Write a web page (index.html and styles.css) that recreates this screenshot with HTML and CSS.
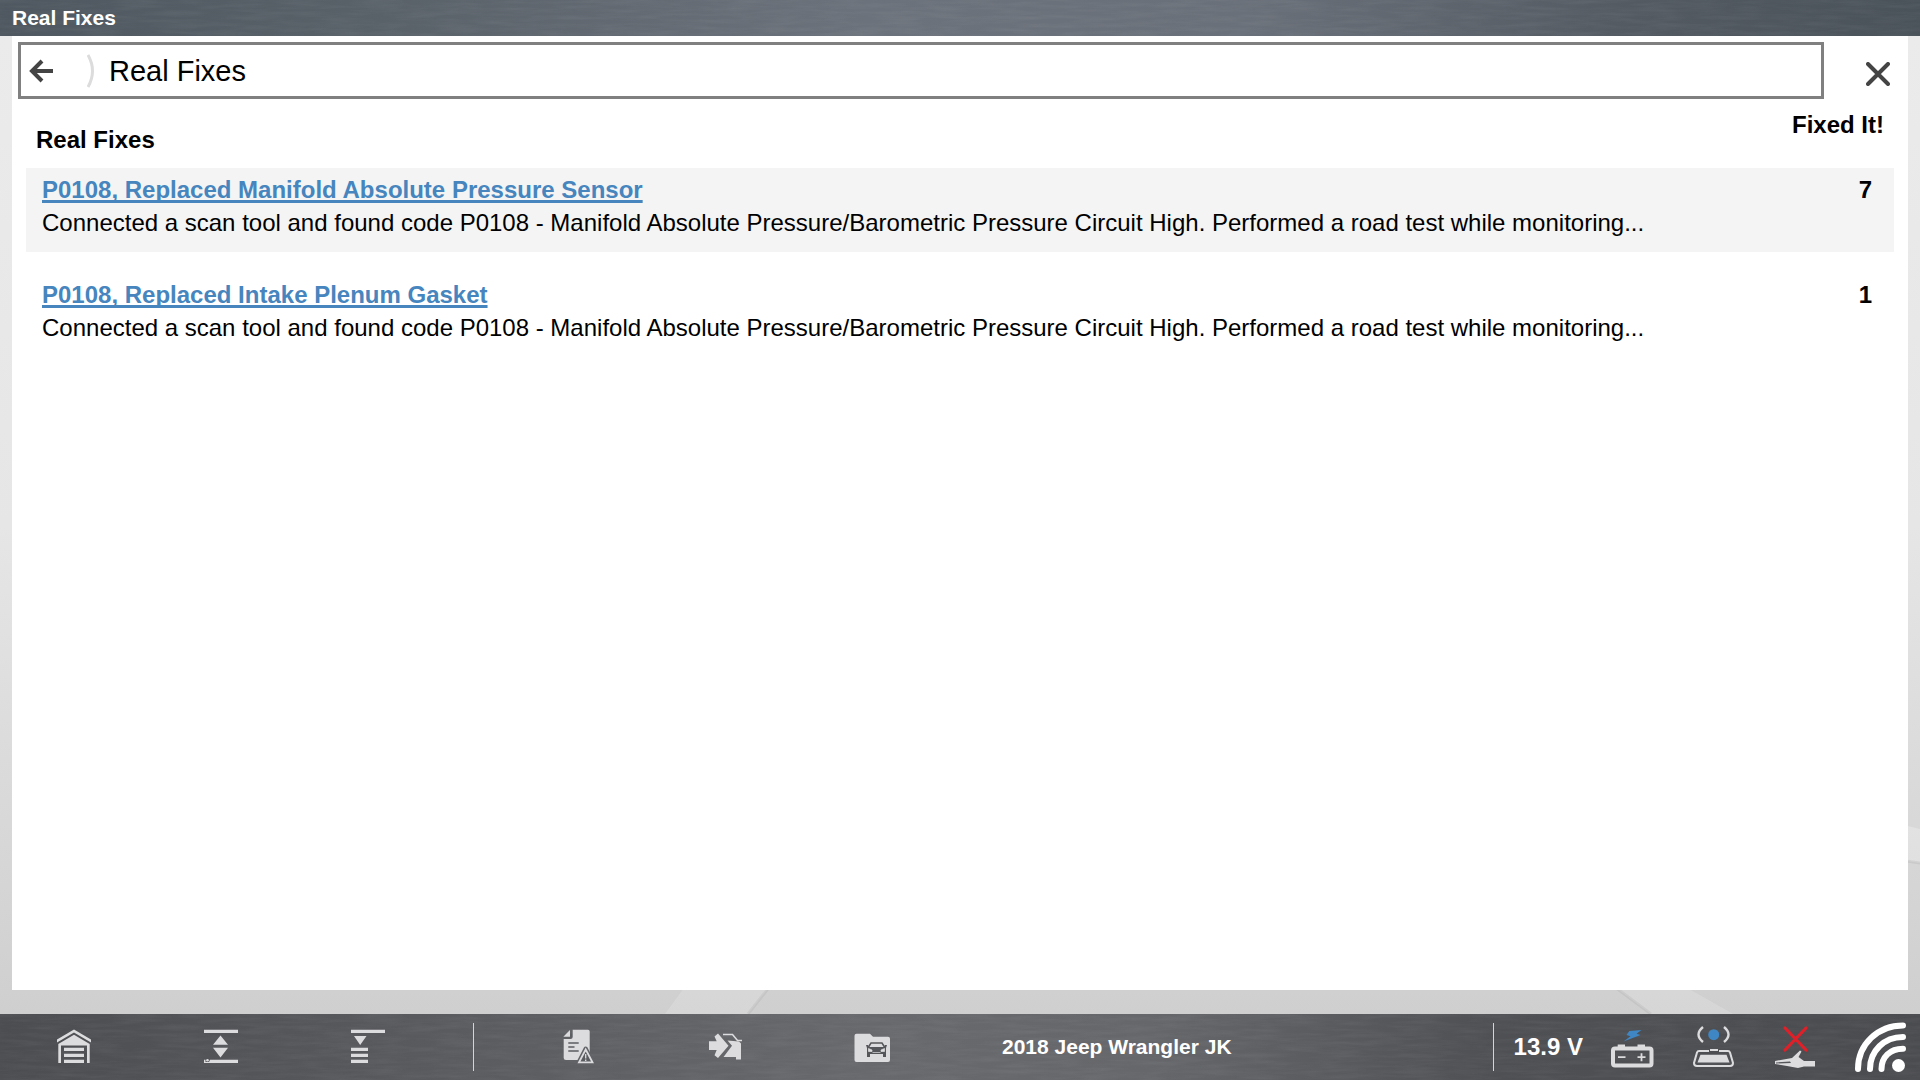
FILE: index.html
```html
<!DOCTYPE html>
<html lang="en">
<head>
<meta charset="utf-8">
<meta name="viewport" content="width=device-width, initial-scale=1">
<title>Real Fixes</title>
<link rel="stylesheet" href="styles.css">
</head>
<body>
<header class="titlebar">
  <svg class="brushed" aria-hidden="true">
    <filter id="grain" x="0" y="0" width="100%" height="100%">
      <feTurbulence type="fractalNoise" baseFrequency="0.025 0.25" numOctaves="3" seed="4"/>
      <feColorMatrix values="0 0 0 0 1  0 0 0 0 1  0 0 0 0 1  1 0 0 0 -0.35"/>
    </filter>
    <rect width="100%" height="100%" filter="url(#grain)"/>
  </svg>
  <span class="titlebar-text">Real Fixes</span>
</header>

<main class="stage">
  <svg class="stripes" viewBox="0 0 1920 978" preserveAspectRatio="none" aria-hidden="true">
    <polygon points="700,930 786,930 748,978 665,978" fill="#fff" fill-opacity=".16"/>
    <path d="M786 930L748 978" stroke="#000" stroke-opacity=".05" stroke-width="3"/>
    <polygon points="1580,925 1640,925 1733,978 1651,978" fill="#fff" fill-opacity=".16"/>
    <path d="M1580 925L1651 978" stroke="#000" stroke-opacity=".05" stroke-width="3"/>
    <polygon points="1900,788 1920,793 1920,827 1900,824" fill="#fff" fill-opacity=".25"/>
    <path d="M1900 824L1920 827" stroke="#000" stroke-opacity=".06" stroke-width="3"/>
  </svg>
  <section class="panel">
    <div class="topline">
      <nav class="crumbs" aria-label="Breadcrumb">
        <button class="icon-button" type="button" aria-label="Back">
          <svg width="24" height="24" viewBox="0 0 24 24" fill="none" stroke="#444" stroke-width="4"><path d="M3 12H24M13 2L3 12L13 22"/></svg>
        </button>
        <svg class="crumb-mark" width="8" height="34" viewBox="0 0 8 34" fill="none" stroke="#dcdcdc" stroke-width="3" aria-hidden="true"><path d="M1 1Q10 17 1 33"/></svg>
        <h1 class="crumb-title">Real Fixes</h1>
      </nav>
      <button class="icon-button close" type="button" aria-label="Close">
        <svg width="24" height="24" viewBox="0 0 24 24" fill="none" stroke="#444" stroke-width="4" stroke-linecap="round"><path d="M2 2L22 22M22 2L2 22"/></svg>
      </button>
    </div>
    <table class="fixes">
      <thead>
        <tr><th class="name-head" scope="col">Real Fixes</th><th class="count-head" scope="col">Fixed It!</th></tr>
      </thead>
      <tbody>
        <tr>
          <td class="fix"><a href="#sensor">P0108, Replaced Manifold Absolute Pressure Sensor</a><p>Connected a scan tool and found code P0108 - Manifold Absolute Pressure/Barometric Pressure Circuit High. Performed a road test while monitoring...</p></td>
          <td class="count">7</td>
        </tr>
        <tr>
          <td class="fix"><a href="#gasket">P0108, Replaced Intake Plenum Gasket</a><p>Connected a scan tool and found code P0108 - Manifold Absolute Pressure/Barometric Pressure Circuit High. Performed a road test while monitoring...</p></td>
          <td class="count">1</td>
        </tr>
      </tbody>
    </table>
  </section>
</main>

<footer class="toolbar">
  <svg class="brushed" aria-hidden="true"><rect width="100%" height="100%" filter="url(#grain)"/></svg>
  <button class="tool" type="button" aria-label="Home">
    <svg width="34" height="34" viewBox="0 0 34 34" fill="#dcdcde"><path d="M17 .5L34 10.500V13.500L17 3.500L0 13.500V10.500Z"/><path d="M17 5.700L32.700 15V34H30V16.500H4V34H1.300V15Z"/><path d="M7 18.700H27V22H7ZM7 24.700H27V28H7ZM7 30.700H27V34H7Z"/></svg>
  </button>
  <button class="tool" type="button" aria-label="Expand">
    <svg width="34" height="34" viewBox="0 0 34 34" fill="#dcdcde"><path d="M0 .7H34V4H0ZM16.500 6.500L24 15.700H9ZM9 18.700H24L16.500 28.500ZM6 30.700H34V34H0V30.700H1.500V33H5Z"/><circle cx="3.500" cy="31.300" r="1.300"/></svg>
  </button>
  <button class="tool" type="button" aria-label="Collapse">
    <svg width="34" height="34" viewBox="0 0 34 34" fill="#dcdcde"><path d="M0 .7H34V4H0ZM3 7H15.500L9.200 16ZM0 18.700H17V22H0ZM0 24.700H17V28H0ZM0 30.700H17V34H0Z"/></svg>
  </button>
  <span class="divider"></span>
  <button class="tool" type="button" aria-label="Code report">
    <svg width="34" height="34" viewBox="0 0 34 34" overflow="visible" fill="#dcdcde"><path d="M2.300 7.700L9 1V7.700Z"/><path d="M11.700 .7H27Q28.700 .7 28.700 2.500V31H5Q2.700 31 2.700 29V10H9.500Q11.700 10 11.700 8Z"/><path d="M7.300 14H17.700M7.300 18H13.500M7.300 22H17.700" stroke="#5b5c60" stroke-width="1.300"/><path d="M24.700 19.500L32 33.500H17.500Z" fill="#626367" stroke="#626367" stroke-width="4" stroke-linejoin="round"/><path d="M24.700 20.500L31.500 33.300H18Z" fill="#5b5c60" stroke="#dcdcde" stroke-width="1.800"/><path d="M24.700 25V29.500M24.700 30.500V32" stroke="#dcdcde" stroke-width="1.300"/></svg>
  </button>
  <button class="tool" type="button" aria-label="Vehicle select">
    <svg width="34" height="34" viewBox="0 0 34 34" fill="#dcdcde"><path d="M1 12.300H8.700L6.500 7.500L10 4.500L20.500 16.700L10 29L6.500 26.300L8.700 21H1Z"/><path d="M15 5.500H24.500L29.500 11.500H34" fill="none" stroke="#dcdcde" stroke-width="1.600"/><path d="M19.500 11.500L31 12.500L33 14.500V30.500H28V28H15.500L24 16.700Z"/></svg>
  </button>
  <button class="tool" type="button" aria-label="Vehicle records">
    <svg width="36" height="34" viewBox="0 0 36 34" fill="#dcdcde"><path d="M2.500 4.700H16L19 7.700H34Q36 7.700 36 9.700V31Q36 33 34 33H2.500Q.5 33 .5 31V6.700Q.5 4.700 2.500 4.700Z"/><path d="M14.500 18L17 14H28L30.500 18" fill="none" stroke="#55565a" stroke-width="1.500"/><path d="M12 16H14L15 18H30L31 16H33L32 19V28H29V25H16V28H13V19Z" fill="#55565a"/><path d="M14.500 19.500L18 21V22.500H14.500ZM30.500 19.500L27 21V22.500H30.500ZM18.500 23.500H26.500" stroke="#dcdcde" stroke-width=".7"/></svg>
  </button>
  <span class="vehicle">2018 Jeep Wrangler JK</span>
  <span class="divider"></span>
  <div class="status">
    <span class="voltage">13.9 V</span>
    <svg width="44" height="44" viewBox="0 -4 44 44" role="img" aria-label="Battery charging"><path d="M19.300 2L31.500 1L26.500 4.700L30.500 6L13.500 12.500L20.500 7.200L16.500 6Z" fill="#3f87c4"/><rect x="3" y="19.500" width="38.500" height="17" rx="2" fill="none" stroke="#dcdcde" stroke-width="4"/><path d="M7.700 15.500H15V18H7.700ZM27.500 15.500H35V18H27.500Z" fill="#dcdcde"/><path d="M8 28.200H15.500M27.500 28.200H35.500M31.500 24.200V32.200" stroke="#dcdcde" stroke-width="1.800"/></svg>
    <svg width="44" height="44" viewBox="0 0 44 44" role="img" aria-label="Vehicle interface connected"><circle cx="21.700" cy="9.700" r="5.500" fill="#3f87c4"/><path d="M11 2Q2 9.500 11 17M32 2Q41 9.500 32 17" fill="none" stroke="#dcdcde" stroke-width="2.400"/><path d="M17 26H7Q5.500 26 5 27.500L2 38Q2 41 5 41H38Q41 41 41 38L38 27.500Q37.500 26 36 26H27M18 25H26" fill="none" stroke="#dcdcde" stroke-width="2"/><path d="M8.500 29.700H34.500L37.500 37.500H5.500Z" fill="#dcdcde"/></svg>
    <svg width="42" height="44" viewBox="0 0 42 44" role="img" aria-label="Probe disconnected"><path d="M1 36L18 33L26 25.500L27.500 26.500L24.500 32L30 36H41V41.500H30L24 43L13 41L1 39Z" fill="#dcdcde"/><path d="M2 37.500L16 36.500L17 38L2 38.500Z" fill="#55565a"/><path d="M11 3L32 25M32 3L11 25" stroke="#df2029" stroke-width="3.200" stroke-linecap="round"/></svg>
    <svg width="52" height="52" viewBox="0 0 52 52" role="img" aria-label="Wireless signal"><path d="M49 4.500C24 4.500 4 23 4 48M49 16C30 16 16 30 16 48M49 27.700C36 27.700 27.500 36 27.500 48" fill="none" stroke="#fff" stroke-width="6" stroke-linecap="round"/><circle cx="44.500" cy="44.500" r="6.500" fill="#fff"/></svg>
  </div>
</footer>
</body>
</html>
```
FILE: styles.css
```css
* { box-sizing: border-box; }

body {
  margin: 0;
  min-height: 100vh;
  display: flex;
  flex-direction: column;
  font-family: "Liberation Sans", Arial, sans-serif;
  font-size: 24px;
  line-height: 33px;
  color: #000;
}

button {
  padding: 0;
  border: 0;
  background: none;
  cursor: pointer;
}

svg { display: block; flex: none; }

.titlebar {
  position: relative;
  min-height: 36px;
  padding: 0 12px 2px;
  display: flex;
  align-items: center;
  background: linear-gradient(90deg, #4f5860, #596169 20%, #6c727b 45%, #6a7079 65%, #535a62 85%, #4a525a);
}

.brushed {
  position: absolute;
  inset: 0;
  width: 100%;
  height: 100%;
  opacity: .09;
}

.titlebar-text {
  position: relative;
  color: #fff;
  font-size: 21px;
  font-weight: bold;
}

.stage {
  position: relative;
  flex: 1;
  display: flex;
  padding: 0 12px 24px;
  background: linear-gradient(#ebebeb, #e6e6e6 50%, #cfcfcf);
}

.stripes {
  position: absolute;
  inset: 0;
  width: 100%;
  height: 100%;
}

.panel {
  position: relative;
  flex: 1;
  min-width: 0;
  background: #fff;
}

.topline {
  display: flex;
  padding: 6px 0 0 6px;
}

.crumbs {
  flex: 1;
  display: flex;
  align-items: center;
  min-height: 57px;
  padding-left: 8px;
  border: 3px solid #808080;
}

.crumb-mark { margin: 0 14px 0 34px; }

.crumb-title {
  margin: 0;
  padding-top: 2px;
  font-size: 29px;
  font-weight: normal;
}

.close {
  width: 84px;
  padding: 6px 0 0 42px;
}

.fixes {
  width: calc(100% - 28px);
  margin: 0 14px;
  border-collapse: collapse;
}

.fixes th, .fixes td {
  padding: 0;
  vertical-align: top;
}

.fixes .name-head {
  padding: 24px 10px 12px;
  text-align: left;
}

.fixes .count-head {
  width: 140px;
  padding: 9px 10px 0 0;
  text-align: right;
}

.fixes .fix { padding: 5px 16px 13px; }

.fixes .fix p { margin: 0; }

.fixes .fix a {
  color: #4685bd;
  font-weight: bold;
  text-decoration-thickness: 3px;
  text-decoration-skip-ink: none;
}

.fixes .count {
  padding: 5px 22px 0 0;
  text-align: right;
  font-weight: bold;
}

.fixes tbody tr:nth-child(odd) { background: #f4f4f4; }

.fixes tbody tr + tr td { border-top: 21px solid #fff; }

.toolbar {
  position: relative;
  display: flex;
  align-items: center;
  min-height: 66px;
  padding: 0 14px 0 0;
  color: #fff;
  font-weight: bold;
  background: linear-gradient(90deg, #4c4d51, #5b5c60 25%, #68696d 45%, #66676b 60%, #4f5054 78%, #4b4c50);
}

.tool {
  position: relative;
  flex: 0 1 147px;
  display: flex;
  justify-content: center;
  padding-bottom: 2px;
}

.divider {
  position: relative;
  flex: none;
  width: 1px;
  height: 48px;
  margin: 0 30px 0 32px;
  background: #d4d4d6;
}

.tool:nth-of-type(n + 4) { left: 0; }

.vehicle {
  position: relative;
  flex: 1;
  padding: 0 0 2px 57px;
  font-size: 21px;
}

.vehicle + .divider { margin: 0 20px 0 0; }

.status {
  position: relative;
  display: flex;
  align-items: center;
  gap: 38px;
}

.voltage {
  margin-right: -11px;
  padding-bottom: 2px;
  white-space: nowrap;
}
```
